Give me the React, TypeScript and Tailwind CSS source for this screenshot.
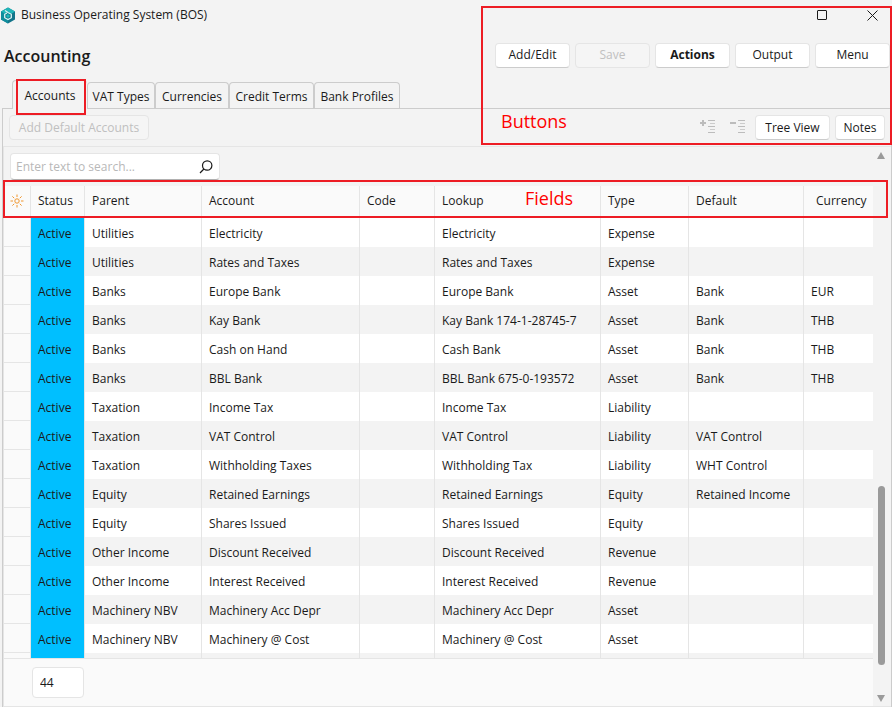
import { clsx } from "clsx";

type Account = {
  parent: string;
  account: string;
  code?: string;
  lookup: string;
  type: string;
  default?: string;
  currency?: string;
};

const TABS = ["Accounts", "VAT Types", "Currencies", "Credit Terms", "Bank Profiles"];

const COLUMNS = [
  { label: "Status", width: "w-[54px]" },
  { label: "Parent", width: "w-[117px]" },
  { label: "Account", width: "w-[158px]" },
  { label: "Code", width: "w-[75px]" },
  { label: "Lookup", width: "w-[166px]" },
  { label: "Type", width: "w-[88px]" },
  { label: "Default", width: "w-[115px]" },
  { label: "Currency", width: "w-[69px]" },
];

const ACCOUNTS: Account[] = [
  { parent: "Utilities", account: "Electricity", lookup: "Electricity", type: "Expense" },
  { parent: "Utilities", account: "Rates and Taxes", lookup: "Rates and Taxes", type: "Expense" },
  { parent: "Banks", account: "Europe Bank", lookup: "Europe Bank", type: "Asset", default: "Bank", currency: "EUR" },
  { parent: "Banks", account: "Kay Bank", lookup: "Kay Bank 174-1-28745-7", type: "Asset", default: "Bank", currency: "THB" },
  { parent: "Banks", account: "Cash on Hand", lookup: "Cash Bank", type: "Asset", default: "Bank", currency: "THB" },
  { parent: "Banks", account: "BBL Bank", lookup: "BBL Bank 675-0-193572", type: "Asset", default: "Bank", currency: "THB" },
  { parent: "Taxation", account: "Income Tax", lookup: "Income Tax", type: "Liability" },
  { parent: "Taxation", account: "VAT Control", lookup: "VAT Control", type: "Liability", default: "VAT Control" },
  { parent: "Taxation", account: "Withholding Taxes", lookup: "Withholding Tax", type: "Liability", default: "WHT Control" },
  { parent: "Equity", account: "Retained Earnings", lookup: "Retained Earnings", type: "Equity", default: "Retained Income" },
  { parent: "Equity", account: "Shares Issued", lookup: "Shares Issued", type: "Equity" },
  { parent: "Other Income", account: "Discount Received", lookup: "Discount Received", type: "Revenue" },
  { parent: "Other Income", account: "Interest Received", lookup: "Interest Received", type: "Revenue" },
  { parent: "Machinery NBV", account: "Machinery Acc Depr", lookup: "Machinery Acc Depr", type: "Asset" },
  { parent: "Machinery NBV", account: "Machinery @ Cost", lookup: "Machinery @ Cost", type: "Asset" },
];

function Logo() {
  return (
    <svg width="16" height="17" viewBox="0 0 16 17" aria-hidden="true">
      <path d="M8 0.500 15 4.500V12.500L8 16.500 1 12.500V4.500Z" fill="#12748a" />
      <path d="M8 0.500 15 4.500 11 7 8 5 4 7 1 4.500Z" fill="#1fb5b8" />
      <path d="M1 4.500 4.500 6.500V11L8 13V16.500L1 12.500Z" fill="#0f8d9c" />
      <path d="M5 3.500 8 5.500 11.300 7.300V10.700L8 12.500 4.700 10.700V7.300L7 6" fill="#11798b" stroke="#d8f3f2" strokeWidth="1.300" />
      <path d="M8 7.200 9.600 8.100V9.900L8 10.800 6.400 9.900V8.100Z" fill="#1fb5b8" />
    </svg>
  );
}

function SunIcon() {
  return (
    <svg className="mx-auto block" width="14" height="14" viewBox="0 0 14 14" fill="none" stroke="#f0962e" aria-hidden="true">
      <circle cx="7" cy="7" r="2.200" />
      <path d="M7 0.500V3M7 11V13.500M0.500 7H3M11 7H13.500M2.400 2.400 4.200 4.200M9.800 9.800 11.600 11.600M2.400 11.600 4.200 9.800M9.800 4.200 11.600 2.400" />
    </svg>
  );
}

function TreeIcon({ expand }: { expand?: boolean }) {
  return (
    <svg width="16" height="14" viewBox="0 0 16 14" fill="none" stroke="#bcbcbc" aria-hidden="true">
      <path d="M0 4H6" strokeWidth="2" />
      {expand && <path d="M3 1V7" strokeWidth="2" />}
      <path d="M8 1.500H15M8 7.500H15M8 13.500H15" />
      <path d="M10 4.500H15M10 10.500H15" stroke="#cccccc" />
    </svg>
  );
}

function Button({ label, className, disabled }: { label: string; className?: string; disabled?: boolean }) {
  return (
    <button
      type="button"
      disabled={disabled}
      className={clsx(
        "h-[25px] rounded border text-center leading-4 whitespace-nowrap",
        disabled ? "border-[#e5e5e5] bg-[#f5f5f5] text-[#c0c0c0]" : "border-[#e5e5e5] border-b-[#cccccc] bg-white",
        className
      )}
    >
      {label}
    </button>
  );
}

function TitleBar() {
  return (
    <div className="flex h-7 items-center justify-between pr-3.5">
      <div className="flex items-center gap-[5px] pt-0.5">
        <Logo />
        <span className="leading-4">Business Operating System (BOS)</span>
      </div>
      <div className="flex items-center gap-10 pt-0.5">
        <button type="button" aria-label="Maximize">
          <svg width="10" height="10" viewBox="0 0 10 10" fill="none" stroke="#1a1a1a">
            <rect x="0.500" y="0.500" width="9" height="9" rx="0.500" />
          </svg>
        </button>
        <button type="button" aria-label="Close">
          <svg width="11" height="11" viewBox="0 0 11 11" fill="none" stroke="#1a1a1a">
            <path d="M0.500 0.500 10.500 10.500M10.500 0.500 0.500 10.500" />
          </svg>
        </button>
      </div>
    </div>
  );
}

function Tabs() {
  return (
    <div role="tablist" className="flex items-end pl-3">
      {TABS.map((tab, i) => (
        <button
          key={tab}
          type="button"
          role="tab"
          aria-selected={i === 0}
          className={clsx(
            "rounded-t border border-b-0 border-[#cccccc] pt-0.5",
            i === 0 ? "relative z-10 -mb-px h-[29px] w-[75px] border-r-0 bg-[#f3f3f3]" : "h-[26px]",
            i === 1 && "w-[68px]",
            i === 2 && "w-[74px]",
            i === 3 && "w-[85px]",
            i === 4 && "w-[86px]"
          )}
        >
          {tab}
          {i === 0 && <span className="absolute -top-0.5 left-[3px] h-9 w-[70px] border-2 border-[#ed1c24]" />}
        </button>
      ))}
    </div>
  );
}

function AccountsTable() {
  const cell = "border-r border-[#e5e5e5] px-[7px] whitespace-nowrap last:border-r-0";
  return (
    <table className="w-full table-fixed border-separate border-spacing-0 text-left">
      <thead>
        <tr className="h-8 bg-[#fafafa]">
          <th className="w-[27px] border-r border-[#e5e5e5] p-0 pb-0.5" aria-label="Row marker">
            <SunIcon />
          </th>
          {COLUMNS.map(({ label, width }) => (
            <th key={label} scope="col" className={clsx(cell, width, "pb-0.5 font-normal last:pl-3")}>
              {label}
            </th>
          ))}
        </tr>
      </thead>
      <tbody>
        {ACCOUNTS.map((row, i) => (
          <tr key={row.account} className={clsx("h-[29px]", i % 2 ? "bg-[#f3f3f3]" : "bg-white")}>
            <td className="border-r border-b border-[#e5e5e5] bg-[#fafafa] p-0" />
            <td className={clsx(cell, "bg-[#00bfff] pt-0.5")}>Active</td>
            <td className={clsx(cell, "pt-0.5")}>{row.parent}</td>
            <td className={clsx(cell, "pt-0.5")}>{row.account}</td>
            <td className={clsx(cell, "pt-0.5")}>{row.code}</td>
            <td className={clsx(cell, "pt-0.5")}>{row.lookup}</td>
            <td className={clsx(cell, "pt-0.5")}>{row.type}</td>
            <td className={clsx(cell, "pt-0.5")}>{row.default}</td>
            <td className={clsx(cell, "pt-0.5")}>{row.currency}</td>
          </tr>
        ))}
        <tr className="h-[29px] bg-[#f3f3f3]">
          <td className="border-r border-[#e5e5e5] bg-[#fafafa] p-0" />
          <td className={clsx(cell, "bg-[#00bfff]")} />
          {COLUMNS.slice(1).map(({ label }) => (
            <td key={label} className={cell} />
          ))}
        </tr>
      </tbody>
    </table>
  );
}

function ScrollBar() {
  return (
    <div className="flex w-[18px] shrink-0 flex-col items-center pt-[5px] pr-0.5 pb-1" aria-hidden="true">
      <svg width="8" height="7" viewBox="0 0 8 7" fill="#9a9a9a">
        <path d="M4 0 8 7H0Z" />
      </svg>
      <div className="flex w-[7px] flex-1 flex-col justify-end pb-[30px]">
        <div className="h-[179px] rounded-full bg-[#9a9a9a]" />
      </div>
      <svg width="8" height="7" viewBox="0 0 8 7" fill="#9a9a9a">
        <path d="M0 0H8L4 7Z" />
      </svg>
    </div>
  );
}

export default function App() {
  return (
    <div className="relative flex h-screen flex-col overflow-hidden bg-[#f3f3f3] font-['Open_Sans','Noto_Sans',sans-serif] text-[12px] text-[#1a1a1a]">
      <TitleBar />

      <header className="flex h-[52px] items-center justify-between pt-1 pr-0.5 pb-0.5 pl-1">
        <h1 className="pt-0.5 text-[16px] leading-5 font-semibold">Accounting</h1>
        <div className="flex gap-[5px]">
          <Button label="Add/Edit" className="w-[75px]" />
          <Button label="Save" className="w-[75px]" disabled />
          <Button label="Actions" className="w-[75px] font-bold" />
          <Button label="Output" className="w-[75px]" />
          <Button label="Menu" className="w-[75px]" />
        </div>
      </header>

      <Tabs />

      <main className="ml-0.5 flex min-h-0 flex-1 flex-col border border-b-0 border-[#cccccc]">
        <div className="flex h-[37px] shrink-0 items-center justify-between pr-1.5 pl-1.5">
          <Button label="Add Default Accounts" className="w-[140px]" disabled />
          <div className="flex items-center gap-[5px]">
            <div className="mr-1 flex gap-3.5 pb-1">
              <button type="button" disabled aria-label="Expand all">
                <TreeIcon expand />
              </button>
              <button type="button" disabled aria-label="Collapse all">
                <TreeIcon />
              </button>
            </div>
            <Button label="Tree View" className="w-[75px]" />
            <Button label="Notes" className="w-[50px]" />
          </div>
        </div>

        <section className="flex min-h-0 flex-1 border border-r-0 border-[#e5e5e5]">
          <div className="flex min-w-0 flex-1 flex-col">
            <div className="flex h-[39px] shrink-0 items-start px-1.5 pt-1.5">
              <label className="flex h-[27px] w-[210px] items-center rounded border border-[#e5e5e5] border-b-[#b0b0b0] bg-white pr-1.5 pl-[5px]">
                <input
                  type="text"
                  aria-label="Search accounts"
                  placeholder="Enter text to search..."
                  className="min-w-0 flex-1 outline-none placeholder:text-[#b8b8b8]"
                />
                <svg width="14" height="14" viewBox="0 0 14 14" fill="none" stroke="#1a1a1a" strokeWidth="1.200" aria-hidden="true">
                  <circle cx="8.200" cy="5.500" r="4.700" />
                  <path d="M4.900 9 1 13" />
                </svg>
              </label>
            </div>

            <div className="relative min-h-0 flex-1">
              <div className="h-full overflow-hidden">
                <AccountsTable />
              </div>
              <div className="absolute -top-1.5 -right-[15px] -left-px h-[38px] border-2 border-[#ed1c24]" />
              <span className="absolute top-0 left-[521px] text-[18px] leading-6 text-[#ff0000]">Fields</span>
            </div>

            <footer className="flex h-12 shrink-0 items-center border-t border-[#e5e5e5] bg-[#fafafa] pl-7">
              <input
                type="text"
                readOnly
                value="44"
                aria-label="Record count"
                className="h-[31px] w-[52px] rounded border border-[#e5e5e5] bg-white px-[7px] outline-none"
              />
            </footer>
          </div>
          <ScrollBar />
        </section>
      </main>

      <div className="pointer-events-none absolute top-1.5 right-0 z-20 h-[139px] w-[411px] border-2 border-[#ed1c24]">
        <span className="absolute bottom-2.5 left-[18px] text-[18px] leading-6 text-[#ff0000]">Buttons</span>
      </div>
    </div>
  );
}
